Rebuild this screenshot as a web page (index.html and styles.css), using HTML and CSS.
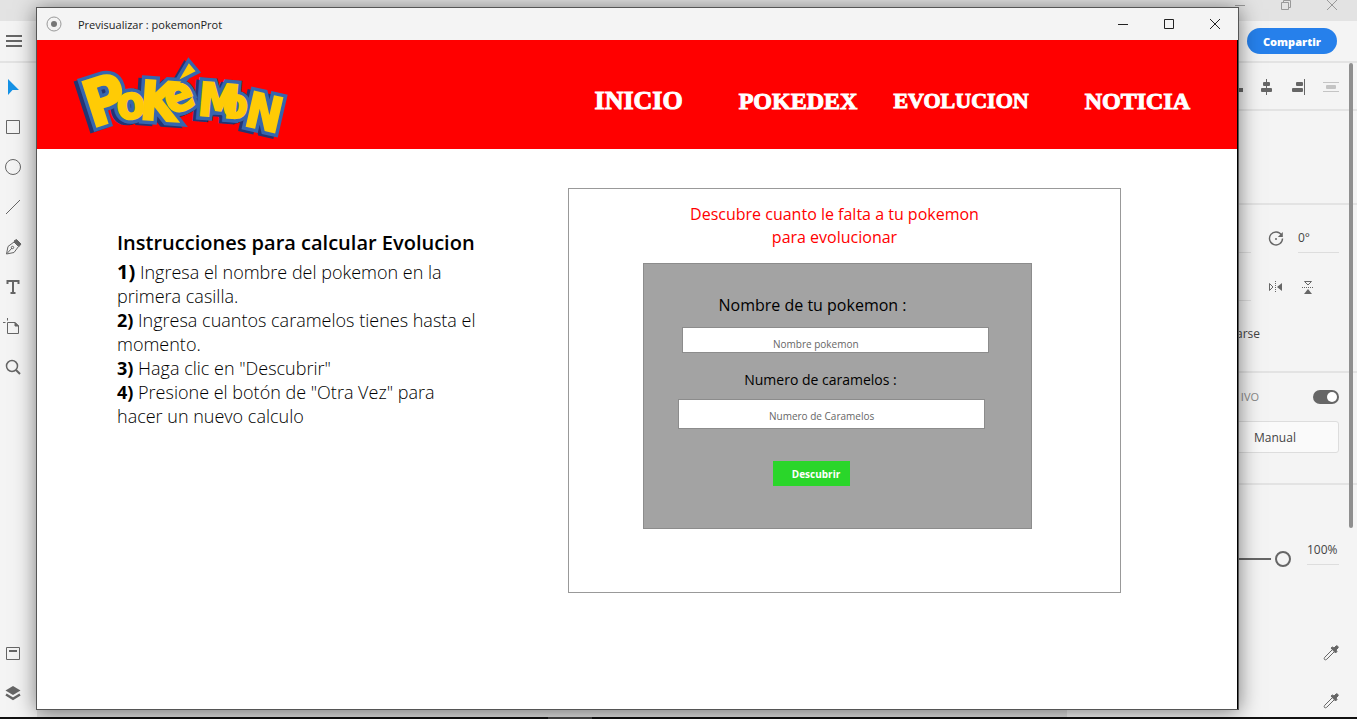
FILE: index.html
```html
<!DOCTYPE html>
<html lang="es">
<head>
<meta charset="utf-8">
<title>Previsualizar : pokemonProt</title>
<link rel="stylesheet" href="styles.css">
</head>
<body>
<div class="app">
  <div class="app-title">
    <button class="app-control" aria-label="Minimizar"><svg width="12" height="12" viewBox="0 0 12 12"><path d="M1 5.5h10"/></svg></button>
    <button class="app-control" aria-label="Restaurar"><svg width="12" height="12" viewBox="0 0 12 12"><path d="M1.5 2.5h7v7h-7zM3.5 2.5v-2h7v7h-2"/></svg></button>
    <button class="app-control" aria-label="Cerrar"><svg width="12" height="12" viewBox="0 0 12 12"><path d="M1 0l10 10M11 0L1 10"/></svg></button>
  </div>
  <div class="app-bar">
    <button class="icon-btn menu" aria-label="Menú"><svg width="16" height="14" viewBox="0 0 16 14"><path d="M0 2h16M0 7h16M0 12h16" stroke-width="2"/></svg></button>
    <button class="share">Compartir</button>
  </div>
  <div class="workspace">
    <nav class="tools" aria-label="Herramientas">
      <button class="icon-btn" aria-label="Seleccionar"><svg width="20" height="20" viewBox="0 0 20 20"><path d="M5 2v16l4.5-5H16z" fill="#1592e6" stroke="none"/></svg></button>
      <button class="icon-btn" aria-label="Rectángulo"><svg width="20" height="20" viewBox="0 0 20 20"><path d="M3.5 3.5h13v13h-13z"/></svg></button>
      <button class="icon-btn" aria-label="Elipse"><svg width="20" height="20" viewBox="0 0 20 20"><circle cx="10" cy="10" r="7.5"/></svg></button>
      <button class="icon-btn" aria-label="Línea"><svg width="20" height="20" viewBox="0 0 20 20"><path d="M3 17L17 3"/></svg></button>
      <button class="icon-btn" aria-label="Pluma"><svg width="20" height="20" viewBox="0 0 20 20"><path d="M3.5 17L5 9.5 11 5l4.5 4.5-4.5 6zM4 16.5l5-5.5"/><circle cx="9.5" cy="10.5" r="1.2"/><path d="M11 4l2.5-1.5 4.5 4.5-2 2.5z" fill="#666"/></svg></button>
      <button class="icon-btn" aria-label="Texto"><svg width="20" height="20" viewBox="0 0 20 20"><path d="M4.5 7V4h11v3M10 4v12M7.500 16h5" stroke-width="2"/></svg></button>
      <button class="icon-btn" aria-label="Mesa de trabajo"><svg width="20" height="20" viewBox="0 0 20 20"><path d="M4.5 5.5H12l3.5 3.5v7.5h-11zM0 5.5h2.5M4.5 1v2.5"/><path d="M12 5.5V9h3.5z" fill="#666"/></svg></button>
      <button class="icon-btn" aria-label="Zoom"><svg width="20" height="20" viewBox="0 0 20 20"><circle cx="9" cy="9" r="5.5" stroke-width="1.5"/><path d="M13 13l4 4" stroke-width="2"/></svg></button>
      <span class="spacer"></span>
      <button class="icon-btn" aria-label="Activos"><svg width="20" height="20" viewBox="0 0 20 20"><path d="M3.5 4.5h13v12h-13z"/><path d="M6 8h8" stroke-width="2"/></svg></button>
      <button class="icon-btn" aria-label="Capas"><svg width="20" height="20" viewBox="0 0 20 20"><path d="M10 3l7.5 4.5L10 12 2.5 7.5z" fill="#666" stroke="none"/><path d="M3 11.5l7 4.3 7-4.3" stroke-width="2.4"/></svg></button>
    </nav>
    <div class="canvas"></div>
    <aside class="inspector">
      <div class="section align">
        <button class="icon-btn" aria-label="Alinear a la izquierda"><svg width="20" height="20" viewBox="0 0 20 20"><path d="M2.5 2v16"/><path d="M5 4h7v4H5zM5 11h13v4H5z" fill="#666" stroke="none"/></svg></button>
        <button class="icon-btn" aria-label="Centrar"><svg width="20" height="20" viewBox="0 0 20 20"><path d="M9.5 2v16"/><rect x="6" y="5" width="7" height="4" rx="1" fill="#666" stroke="none"/><rect x="4" y="11" width="11" height="4" rx="1" fill="#666" stroke="none"/></svg></button>
        <button class="icon-btn" aria-label="Alinear a la derecha"><svg width="20" height="20" viewBox="0 0 20 20"><path d="M15.5 2v16"/><rect x="7" y="5" width="7" height="4" rx="1" fill="#666" stroke="none"/><rect x="3" y="11" width="11" height="4" rx="1" fill="#666" stroke="none"/></svg></button>
        <button class="icon-btn faint" aria-label="Distribuir"><svg width="20" height="20" viewBox="0 0 20 20"><path d="M2 5.5h16M2 14.5h16"/><rect x="5" y="8" width="10" height="4" rx="1" fill="#c4c4c4" stroke="none"/></svg></button>
      </div>
      <div class="section repeat"></div>
      <div class="section transform">
        <div class="field-row">
          <span class="field hidden-field"></span>
          <svg width="20" height="20" viewBox="0 0 20 20"><path d="M15.5 5A6.5 6.5 0 1 0 16.5 8.500" stroke-width="1.4"/><path d="M16.8 2v5h-5z" fill="#666" stroke="none"/><circle cx="10" cy="9" r="1" fill="#666" stroke="none"/></svg>
          <input class="field angle" type="text" value="0°" aria-label="Rotación">
        </div>
        <div class="field-row flips">
          <span class="field hidden-field"></span>
          <button class="icon-btn" aria-label="Voltear horizontalmente"><svg width="20" height="20" viewBox="0 0 20 20"><path d="M3.5 5.5v7L7 9z"/><path d="M16 5v8l-5-4z" fill="#666" stroke="none"/><path d="M9.5 3v12" stroke-dasharray="1 1"/></svg></button>
          <button class="icon-btn" aria-label="Voltear verticalmente"><svg width="20" height="20" viewBox="0 0 20 20"><path d="M6.5 3.5h7L10 7z"/><path d="M6 16h8l-4-5z" fill="#666" stroke="none"/><path d="M4 9.5h12" stroke-dasharray="1 1"/></svg></button>
        </div>
        <div class="scroll-label">arse</div>
      </div>
      <div class="section responsive">
        <label class="toggle-row"><span>IVO</span><input type="checkbox" class="toggle" checked></label>
        <button class="manual">Manual</button>
      </div>
      <div class="section appearance">
        <div class="opacity-row">
          <input type="range" class="opacity" min="0" max="100" value="100" aria-label="Opacidad">
          <input class="field percent" type="text" value="100%" aria-label="Porcentaje de opacidad">
        </div>
        <button class="icon-btn pick" aria-label="Color de relleno"><svg width="20" height="20" viewBox="0 0 20 20"><path d="M11 7l-7 7c-1 1-1 2-.5 2.500s1.500.5 2.500-.5l7-7"/><path d="M10 5l1.5-1 1.5 1 2-2c1-1 3 1 2 2l-2 2 1 1.500-1.500 1.500z" fill="#666"/></svg></button>
        <button class="icon-btn pick" aria-label="Color de borde"><svg width="20" height="20" viewBox="0 0 20 20"><path d="M11 7l-7 7c-1 1-1 2-.5 2.500s1.500.5 2.500-.5l7-7"/><path d="M10 5l1.5-1 1.5 1 2-2c1-1 3 1 2 2l-2 2 1 1.500-1.500 1.500z" fill="#666"/></svg></button>
      </div>
      <span class="scrollbar"></span>
    </aside>
  </div>
  <div class="taskbar"><span class="task"></span></div>
</div>

<div class="window">
  <div class="window-title">
    <svg width="16" height="16" viewBox="0 0 16 16"><circle cx="8" cy="8" r="7" stroke="#999"/><circle cx="8" cy="8" r="3" fill="#777" stroke="none"/></svg>
    <span class="window-name">Previsualizar : pokemonProt</span>
    <button class="window-control" aria-label="Minimizar"><svg width="12" height="12" viewBox="0 0 12 12"><path d="M1 6.5h10"/></svg></button>
    <button class="window-control" aria-label="Maximizar"><svg width="12" height="12" viewBox="0 0 12 12"><path d="M1.5 1.5h9v9h-9z"/></svg></button>
    <button class="window-control" aria-label="Cerrar"><svg width="12" height="12" viewBox="0 0 12 12"><path d="M1 1l10 10M11 1L1 11"/></svg></button>
  </div>
  <div class="page">
    <header class="header">
      <svg class="logo" width="212" height="80" viewBox="0 0 212 80" role="img" aria-label="Pokémon">
        <defs>
          <g id="word">
            <text><tspan x="19" y="70" rotate="-18" font-size="64">P</tspan><tspan x="66" y="61" rotate="4" font-size="54">K</tspan><tspan x="45" y="62" rotate="-6" font-size="46">o</tspan><tspan x="124" y="57" rotate="5" font-size="46">M</tspan><tspan x="97" y="57" rotate="-20" font-size="48">e</tspan><tspan x="170" y="67" rotate="13" font-size="48">N</tspan><tspan x="149" y="58" rotate="6" font-size="40">o</tspan></text>
            <path d="M109 19l7-12 5 6z"/>
          </g>
        </defs>
        <use href="#word" class="logo-depth" x="-4" y="2"/>
        <use href="#word" class="logo-edge"/>
        <use href="#word" class="logo-face"/>
      </svg>
      <nav class="nav">
        <a href="#inicio" class="nav-large">INICIO</a>
        <a href="#pokedex" class="nav-medium">POKEDEX</a>
        <a href="#evolucion" class="nav-small">EVOLUCION</a>
        <a href="#noticia" class="nav-medium">NOTICIA</a>
      </nav>
    </header>
    <main class="main">
      <section class="instructions">
        <h1>Instrucciones para calcular Evolucion</h1>
        <p><b class="first">1)</b> Ingresa el nombre del pokemon en la primera casilla.</p>
        <p><b>2)</b> Ingresa cuantos caramelos tienes hasta el momento.</p>
        <p><b>3)</b> Haga clic en "Descubrir"</p>
        <p><b>4)</b> Presione el botón de "Otra Vez" para hacer un nuevo calculo</p>
      </section>
      <section class="card">
        <h2>Descubre cuanto le falta a tu pokemon<br>para evolucionar</h2>
        <form class="form">
          <label for="name" class="label-name">Nombre de tu pokemon :</label>
          <input id="name" class="input-name" type="text" placeholder="Nombre pokemon">
          <label for="candy" class="label-candy">Numero de caramelos :</label>
          <input id="candy" class="input-candy" type="text" placeholder="Numero de Caramelos">
          <button type="button" class="submit">Descubrir</button>
        </form>
      </section>
    </main>
  </div>
</div>
</body>
</html>
```

FILE: styles.css
```css
* { box-sizing: border-box; }
html, body { height: 100%; }
body {
  margin: 0;
  overflow: hidden;
  font-family: "Open Sans", "Noto Sans", sans-serif;
  color: #000;
}
button, input { font: inherit; color: inherit; margin: 0; }
button { padding: 0; border: 0; background: none; }
h1, h2, p { margin: 0; }
svg { display: block; fill: none; stroke: #666; flex: none; }

/* editor behind the preview */
.app { display: flex; flex-direction: column; height: 100vh; background: #f4f4f4; }
.app-title { display: flex; justify-content: flex-end; height: 21px; padding-right: 2px; background: #e3e3e3; flex: none; }
.app-control { display: flex; justify-content: center; width: 46px; height: 12px; }
.app-control svg { stroke: #999; }
.app-bar {
  display: flex; align-items: center; justify-content: space-between;
  height: 42px; flex: none; padding: 0 20px 0 4px;
  border-bottom: 2px solid #e3e3e3;
}
.icon-btn { display: flex; align-items: center; justify-content: center; width: 20px; height: 20px; }
.share {
  width: 90px; height: 26px; border-radius: 13px;
  background: #2680eb; color: #fff; font-size: 11px; font-weight: 800;
}
.workspace { display: flex; flex: 1; min-height: 0; }
.tools { display: flex; flex-direction: column; width: 37px; padding: 4px 0 4px 3px; }
.tools .icon-btn { height: 40px; }
.spacer { flex: 1; }
.canvas { flex: 1; background: #e0e0e0; }
.inspector { position: relative; display: flex; flex-direction: column; width: 290px; color: #444; font-size: 12px; }
.section { border-bottom: 2px solid #e3e3e3; padding-right: 18px; flex: none; }
.align { display: flex; align-items: center; justify-content: flex-end; gap: 12px; height: 48px; padding: 2px 16px 0 0; }
.faint svg { stroke: #c4c4c4; }
.repeat { height: 94px; }
.transform { height: 168px; padding-top: 22px; }
.field-row { display: flex; align-items: center; justify-content: flex-end; height: 26px; }
.field-row svg { margin-left: 15px; }
.field { height: 26px; border: 0; border-bottom: 1px solid #ddd; background: none; padding: 0 0 4px; }
.hidden-field { width: 40px; }
.angle { width: 41px; margin-left: 12px; }
.flips { margin-top: 22px; justify-content: flex-start; padding-left: 144px; }
.flips .icon-btn svg { margin: 0; }
.flips .icon-btn { margin-left: 12px; }
.flips .hidden-field + .icon-btn { margin-left: 15px; }
.scroll-label { margin: 24px 79px 0 0; text-align: right; line-height: 18px; }
.responsive { display: flex; flex-direction: column; align-items: flex-end; height: 112px; padding-top: 16px; }
.toggle-row { display: flex; align-items: center; gap: 54px; height: 16px; font-size: 11px; line-height: 16px; color: #888; }
.toggle { appearance: none; width: 26px; height: 14px; border-radius: 7px; background: #666; display: flex; justify-content: flex-end; padding: 2px; }
.toggle::before { content: ""; width: 10px; height: 10px; border-radius: 5px; background: #fff; }
.manual { width: 128px; height: 32px; margin-top: 16px; border: 1px solid #ddd; border-radius: 3px; background: #fafafa; }
.appearance { display: flex; flex-direction: column; align-items: flex-end; flex: 1; border: 0; padding-top: 54px; }
.opacity-row { display: flex; align-items: flex-end; gap: 16px; }
.opacity { appearance: none; width: 206px; height: 16px; margin-bottom: -2px; background: linear-gradient(#666, #666) center / 100% 2px no-repeat; }
.opacity::-webkit-slider-thumb {
  appearance: none; width: 16px; height: 16px; border: 2px solid #666; border-radius: 8px;
  background: #f4f4f4; box-shadow: 0 0 0 4px #f4f4f4;
}
.percent { width: 32px; }
.pick { margin: 78px -2px 0 0; }
.pick + .pick { margin-top: 28px; }
.scrollbar { position: absolute; top: 0; right: 4px; width: 4px; height: 465px; border-radius: 2px; background: #8f8f8f; }
.taskbar { height: 2px; flex: none; background: #111; padding-left: 548px; }
.task { display: block; width: 44px; height: 2px; background: #444; }

/* preview window, floating above the editor */
.window {
  position: absolute; inset: 7px 118px 9px 36px;
  display: flex; flex-direction: column;
  border: 1px solid #555; background: #fff;
  box-shadow: 0 2px 20px rgba(0, 0, 0, 0.5);
}
.window-title { display: flex; align-items: center; height: 32px; flex: none; padding-left: 9px; background: #f4f4f4; }
.window-name { flex: 1; margin-left: 16px; font-size: 11px; color: #222; }
.window-control { display: flex; align-items: center; justify-content: center; width: 46px; height: 32px; }
.window-control svg { stroke: #222; }
.page { flex: 1; border-right: 1px solid #000; }
.header { display: flex; align-items: center; height: 109px; background: #f00; padding: 0 47px 0 36px; }
.logo { margin-top: 7px; overflow: visible; font-family: "DejaVu Sans Condensed", "DejaVu Sans", sans-serif; font-weight: 700; stroke-linejoin: miter; paint-order: stroke; }
.logo-depth { fill: #243471; stroke: #243471; stroke-width: 8px; }
.logo-edge { fill: #3666ae; stroke: #3666ae; stroke-width: 9px; }
.logo-face { fill: #ffcb05; stroke: #ffcb05; stroke-width: 2px; }
.nav { display: flex; align-items: center; margin-left: auto; margin-top: 13px; font-family: "Liberation Serif", serif; font-weight: 700; line-height: 28px; }
.nav a { color: #fff; text-decoration: none; -webkit-text-stroke: 1px #fff; }
.nav .nav-large { font-size: 26px; }
.nav .nav-medium { font-size: 24px; margin-left: 56px; }
.nav .nav-small { font-size: 22px; margin-left: 36px; }

.main { display: flex; justify-content: space-between; align-items: flex-start; padding: 39px 116px 0 80px; }
.instructions { width: 362px; padding-top: 43px; font-size: 18px; font-weight: 300; line-height: 24px; }
.instructions h1 { font-size: 20px; font-weight: 600; line-height: 24px; margin-bottom: 5px; white-space: nowrap; }
.instructions b { font-weight: 700; }
.instructions .first { font-size: 20px; }
.card { width: 553px; padding: 14px 74px 63px; border: 1px solid #999; text-align: center; }
.card h2 { margin-right: 20px; color: #f00; font-size: 16px; font-weight: 500; line-height: 23px; }
.form {
  display: flex; flex-direction: column; align-items: center;
  margin: 14px 14px 0 0; padding: 30px 34px 42px;
  border: 1px solid #8c8c8c; background: #a3a3a3;
}
.form label { font-weight: 500; line-height: 22px; }
.label-name { font-size: 16px; margin-right: 50px; }
.label-candy { font-size: 14px; margin: 16px 34px 0 0; }
.form input { width: 307px; border: 1px solid #8c8c8c; background: #fff; padding: 8px 90px 0; font-size: 10px; }
.form input::placeholder { color: #666; opacity: 1; }
.form .input-name { height: 26px; margin: 11px 4px 0 0; }
.form .input-candy { height: 30px; margin: 8px 12px 0 0; padding-top: 4px; }
.submit { width: 77px; height: 25px; margin: 32px 52px 0 0; padding-left: 9px; background: #2ad62a; color: #fff; font-size: 10px; font-weight: 700; }
```
